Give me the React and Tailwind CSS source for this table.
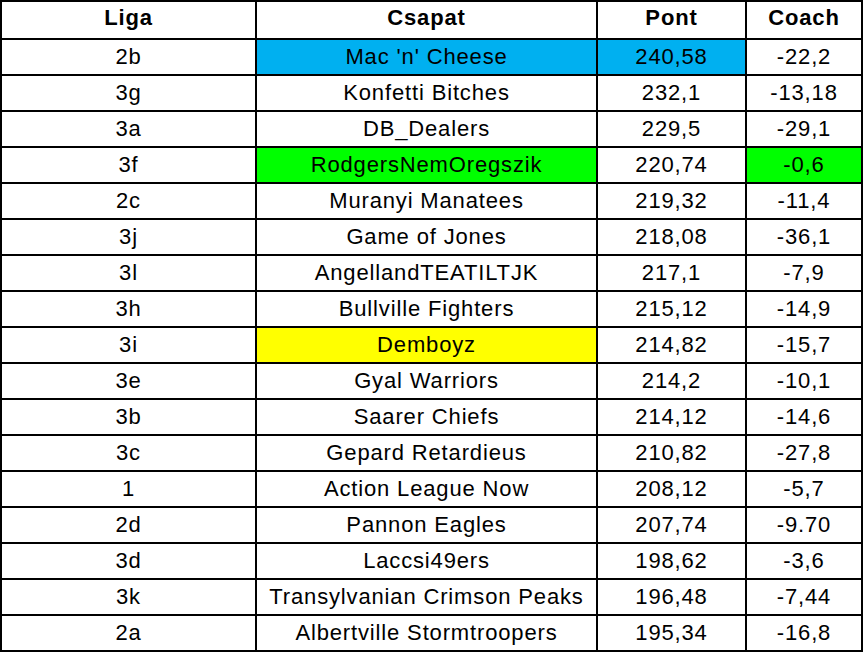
import React from "react";

const rows = [
  ["2b", "Mac 'n' Cheese", "240,58", "-22,2", { c: "bg-[#00b0f0]", p: "bg-[#00b0f0]" }],
  ["3g", "Konfetti Bitches", "232,1", "-13,18", {}],
  ["3a", "DB_Dealers", "229,5", "-29,1", {}],
  ["3f", "RodgersNemOregszik", "220,74", "-0,6", { c: "bg-[#00ff00]", k: "bg-[#00ff00]" }],
  ["2c", "Muranyi Manatees", "219,32", "-11,4", {}],
  ["3j", "Game of Jones", "218,08", "-36,1", {}],
  ["3l", "AngellandTEATILTJK", "217,1", "-7,9", {}],
  ["3h", "Bullville Fighters", "215,12", "-14,9", {}],
  ["3i", "Demboyz", "214,82", "-15,7", { c: "bg-[#ffff00]" }],
  ["3e", "Gyal Warriors", "214,2", "-10,1", {}],
  ["3b", "Saarer Chiefs", "214,12", "-14,6", {}],
  ["3c", "Gepard Retardieus", "210,82", "-27,8", {}],
  ["1", "Action League Now", "208,12", "-5,7", {}],
  ["2d", "Pannon Eagles", "207,74", "-9.70", {}],
  ["3d", "Laccsi49ers", "198,62", "-3,6", {}],
  ["3k", "Transylvanian Crimson Peaks", "196,48", "-7,44", {}],
  ["2a", "Albertville Stormtroopers", "195,34", "-16,8", {}],
];

export default function App() {
  const cell = "border-2 border-black text-center p-0 leading-none";
  return (
    <div className="w-[863px] h-[655px] bg-white overflow-hidden" style={{ fontFamily: '"Liberation Sans", Arial, sans-serif' }}>
      <table className="border-collapse table-fixed w-[861px] text-[22px] tracking-[0.85px] text-black">
        <colgroup>
          <col className="w-[255px]" />
          <col className="w-[341px]" />
          <col className="w-[149px]" />
          <col className="w-[116px]" />
        </colgroup>
        <thead>
          <tr>
            <th className={`${cell} h-[38px] font-bold pb-[4px]`}>Liga</th>
            <th className={`${cell} h-[38px] font-bold pb-[4px]`}>Csapat</th>
            <th className={`${cell} h-[38px] font-bold pb-[4px]`}>Pont</th>
            <th className={`${cell} h-[38px] font-bold pb-[4px]`}>Coach</th>
          </tr>
        </thead>
        <tbody>
          {rows.map(([l, c, p, k, hl], i) => (
            <tr key={i}>
              <td className={`${cell} h-[36px]`}>{l}</td>
              <td className={`${cell} h-[36px] ${hl.c || ""}`}>{c}</td>
              <td className={`${cell} h-[36px] ${hl.p || ""}`}>{p}</td>
              <td className={`${cell} h-[36px] ${hl.k || ""}`}>{k}</td>
            </tr>
          ))}
        </tbody>
      </table>
    </div>
  );
}
